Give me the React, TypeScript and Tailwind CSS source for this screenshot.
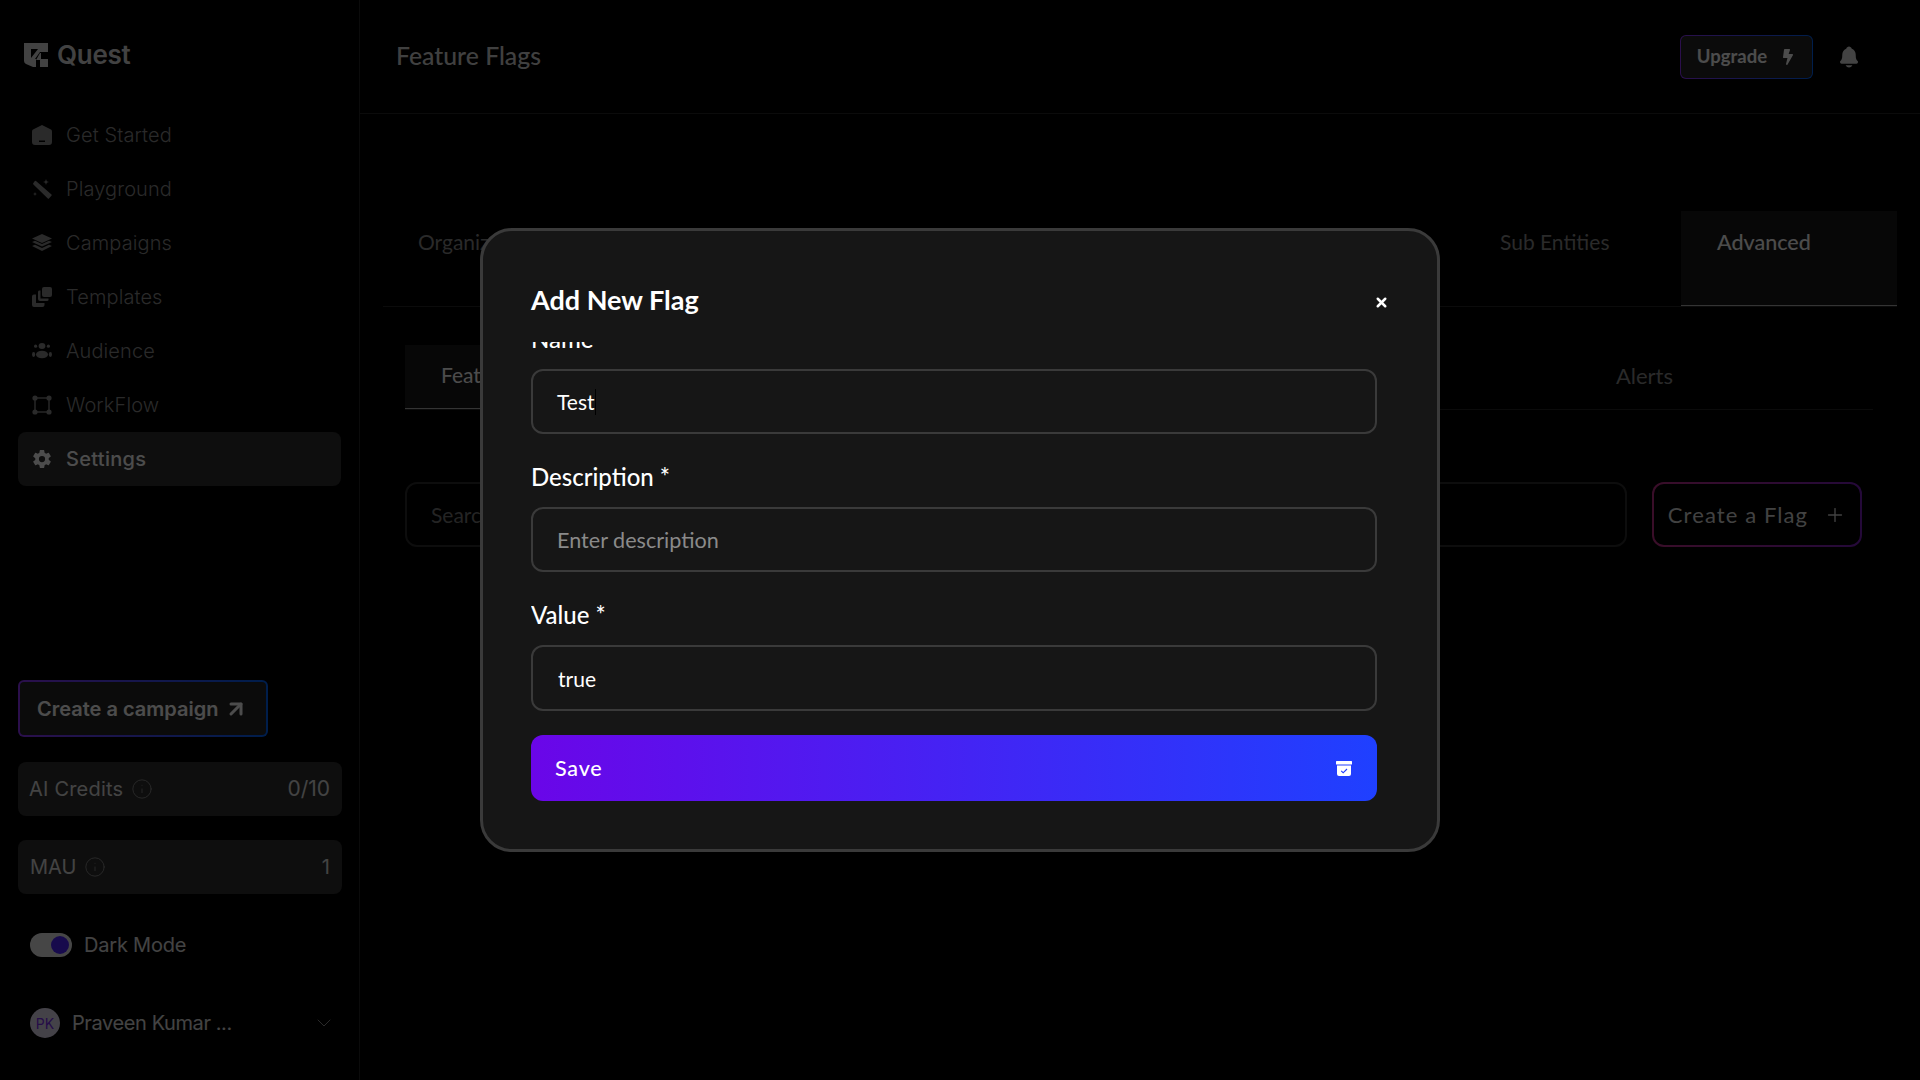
import React from 'react';
import { ArrowUpRight, ChevronDown, Info, Plus, X } from 'lucide-react';
import { FaBolt } from 'react-icons/fa';
import { IoNotifications, IoSettingsSharp } from 'react-icons/io5';

const HomeIcon = () => (
  <svg width="20" height="20" viewBox="0 0 20 20" fill="currentColor">
    <path d="M10 0 L19 4.5 Q20 5 20 6.5 V17 Q20 20 17 20 H3 Q0 20 0 17 V6.5 Q0 5 1 4.5 Z M7 15.5 V17 H13 V15.5 Z" fillRule="evenodd" />
  </svg>
);

const WandIcon = () => (
  <svg width="20" height="20" viewBox="0 0 20 20" fill="currentColor">
    <path d="M4 2 L19.5 15.5 Q20 16 19.6 16.6 L17 19.4 Q16.4 20 15.8 19.4 L1.4 5.6 Q0.6 4.8 1.4 4 L2.6 2.2 Q3.2 1.4 4 2 Z" />
    <path d="M14 0 L14.8 2.2 L17 3 L14.8 3.8 L14 6 L13.2 3.8 L11 3 L13.2 2.2 Z" />
    <path d="M3 13 L3.6 14.4 L5 15 L3.6 15.6 L3 17 L2.4 15.6 L1 15 L2.4 14.4 Z" />
  </svg>
);

const LayersIcon = () => (
  <svg width="20" height="18" viewBox="0 0 20 18" fill="currentColor">
    <path d="M10 0 L20 4.5 L10 9 L0 4.5 Z" />
    <path d="M0 8 L3 6.8 L10 10 L17 6.8 L20 8 L10 12.5 Z" />
    <path d="M0 12 L3 10.8 L10 14 L17 10.8 L20 12 L10 17 Z" />
  </svg>
);

const TemplatesIcon = () => (
  <svg width="20" height="20" viewBox="0 0 20 20" fill="currentColor">
    <rect x="10" y="0" width="10" height="10" rx="2" />
    <path d="M7 3.5 H8.5 V11.5 H16.5 V13 Q16.5 14 15 14 H8 Q6 14 6 12 V5 Q6 3.5 7 3.5 Z" />
    <path d="M2 7.5 H4 V16 H12.5 V18 Q12.5 20 10.5 20 H2 Q0 20 0 18 V9.5 Q0 7.5 2 7.5 Z" />
  </svg>
);

const AudienceIcon = () => (
  <svg width="20" height="16" viewBox="0 0 20 16" fill="currentColor">
    <ellipse cx="10" cy="3" rx="3.4" ry="3" />
    <ellipse cx="10" cy="11.5" rx="6" ry="3.8" />
    <circle cx="3.6" cy="3.2" r="1.6" />
    <circle cx="16.4" cy="3.2" r="1.6" />
    <ellipse cx="1.6" cy="11.5" rx="1.6" ry="2.4" />
    <ellipse cx="18.4" cy="11.5" rx="1.6" ry="2.4" />
  </svg>
);

const WorkflowIcon = () => (
  <svg width="20" height="20" viewBox="0 0 20 20" fill="currentColor" stroke="currentColor">
    <rect x="3" y="3" width="14" height="14" fill="none" strokeWidth="1.4" />
    <circle cx="3" cy="3" r="2.6" stroke="none" />
    <circle cx="17" cy="3" r="2.6" stroke="none" />
    <circle cx="3" cy="17" r="2.6" stroke="none" />
    <circle cx="17" cy="17" r="2.6" stroke="none" />
  </svg>
);

// shield with a notch cut out of the lower right corner
const QuestLogo = () => (
  <svg width="24" height="24" viewBox="0 0 24 24" fill="currentColor">
    <path d="M0 0 H24 V9 H16 L11 16 H12 V24 H9 L2 21 Q0 20 0 18 Z M7 6 V15 L14 6 Z" fillRule="evenodd" />
    <path d="M16 10 H17 V16 H24 V24 H16 V17 H12 Z" />
  </svg>
);

const SaveIcon = () => (
  <svg width="16" height="15" viewBox="0 0 16 15" fill="#fff">
    <rect x="0" y="0" width="16" height="3.5" rx="0.5" />
    <path fillRule="evenodd" d="M1 4.5 H15 V13 Q15 15 13 15 H3 Q1 15 1 13 Z M5.6 9.4 L7.2 11 L10.6 7.6 L11.4 8.4 L7.2 12.4 L4.8 10.2 Z" />
  </svg>
);

const navItems = [
  { label: 'Get Started', icon: <HomeIcon /> },
  { label: 'Playground', icon: <WandIcon /> },
  { label: 'Campaigns', icon: <LayersIcon /> },
  { label: 'Templates', icon: <TemplatesIcon /> },
  { label: 'Audience', icon: <AudienceIcon /> },
  { label: 'WorkFlow', icon: <WorkflowIcon /> },
];

const Sidebar = () => (
  <aside className="w-[360px] h-full shrink-0 border-r border-[#262626] flex flex-col px-[18px] font-['Inter',sans-serif]">
    <div className="flex items-center gap-[9px] pl-[6px] pt-[43px] text-[#dcdcdc]">
      <QuestLogo />
      <span className="text-[26px] leading-[24px] font-semibold tracking-[-0.3px]">Quest</span>
    </div>
    <nav className="mt-[41px] flex flex-col">
      {navItems.map((item) => (
        <div key={item.label} className="h-[54px] flex items-center text-[#8c8c8c]">
          <div className="w-[20px] ml-[14px] flex justify-center">{item.icon}</div>
          <span className="ml-[14px] text-[20px] font-light tracking-[0.1px]">{item.label}</span>
        </div>
      ))}
      <div className="h-[54px] flex items-center bg-[#2f2f2f] rounded-lg text-white">
        <div className="w-[20px] ml-[14px] flex justify-center">
          <IoSettingsSharp size={22} />
        </div>
        <span className="ml-[14px] text-[20px] font-medium tracking-[0.3px]">Settings</span>
      </div>
    </nav>
    <div className="mt-[194px] w-[250px] h-[57px] rounded-md p-[2px] bg-linear-to-r/srgb from-[#9035ff] to-[#0065ff]">
      <div className="h-full rounded-[4px] bg-[#262626] flex items-center pl-[17px] gap-[6px] text-white">
        <span className="text-[20px] font-semibold">Create a campaign</span>
        <ArrowUpRight size={24} strokeWidth={3} />
      </div>
    </div>
    <div className="mt-[25px] w-[324px] h-[54px] rounded-lg bg-[#2f2f2f] flex items-center justify-between pl-[11px] pr-3 text-[#e0e0e0] text-[20px]">
      <div className="flex items-center gap-[8px]">
        <span className="tracking-[0.2px]">AI Credits</span>
        <Info size={22} strokeWidth={1} className="text-[#8c8c8c]" />
      </div>
      <span className="text-[21px]">0/10</span>
    </div>
    <div className="mt-[24px] w-[324px] h-[54px] rounded-lg bg-[#2f2f2f] flex items-center justify-between pl-3 pr-3 text-[#e0e0e0] text-[20px]">
      <div className="flex items-center gap-[8px]">
        <span>MAU</span>
        <Info size={22} strokeWidth={1} className="text-[#8c8c8c]" />
      </div>
      <span>1</span>
    </div>
    <div className="mt-[36px] ml-3 flex items-center gap-3">
      <div className="w-[42px] h-[24px] rounded-full bg-[#ececec] flex items-center justify-end pr-[3px]">
        <div className="w-[18px] h-[18px] rounded-full bg-[#4d24ff]" />
      </div>
      <span className="text-[20px] tracking-[-0.2px] text-[#e0e0e0]">Dark Mode</span>
    </div>
    <div className="mt-[48px] ml-3 flex items-center">
      <div className="w-[30px] h-[30px] rounded-full bg-[#e4dcf2] flex items-center justify-center text-[14px] text-[#7c2cf0]">
        PK
      </div>
      <span className="ml-3 text-[20px] tracking-[-0.4px] text-[#e0e0e0]">Praveen Kumar ...</span>
      <ChevronDown size={24} strokeWidth={1} className="ml-auto mr-[5px] text-[#8c8c8c]" />
    </div>
  </aside>
);

const Main = () => (
  <main className="flex-1 h-full flex flex-col font-['Lato',sans-serif]">
    <header className="h-[114px] shrink-0 border-b border-[#262626] flex items-center pl-[36px] pr-[59px]">
      <h1 className="text-[24.8px] font-medium text-[#d8d8d8] -translate-y-[1px]">Feature Flags</h1>
      <div className="ml-auto w-[133px] h-[44px] rounded-md p-px bg-linear-to-r/srgb from-[#9035ff] to-[#0065ff]">
        <div className="h-full rounded-[5px] bg-[#262626] flex items-center justify-center gap-[13px] text-white">
          <span className="text-[18.5px] font-bold">Upgrade</span>
          <FaBolt size={16} />
        </div>
      </div>
      <div className="ml-[24px] text-[#e0e0e0]">
        <IoNotifications size={24} />
      </div>
    </header>
    <div className="pl-[23px] pr-[23px] pt-[97px]">
      <div className="h-[96px] flex border-b border-[#262626]">
        <div className="w-[200px] pl-[35px] pt-[15px] text-[21px] text-[#8c8c8c]">Organization</div>
        <div className="ml-auto flex">
          <div className="w-[181px] pt-[15px] text-[21px] text-[#8c8c8c]">Sub Entities</div>
          <div className="w-[216px] pl-[36px] pt-[15px] text-[21.5px] font-medium text-white bg-[#181818] border-b border-[#b0b0b0]">Advanced</div>
        </div>
      </div>
      <div className="mx-[22px] mr-[24px]">
        <div className="mt-[38px] h-[65px] flex border-b border-[#262626]">
          <div className="w-[200px] pl-[36px] pt-[14px] text-[21px] text-white bg-[#181818] border-b border-[#b0b0b0]">Feature Flags</div>
          <div className="ml-auto mr-[200px] pt-[14px] text-[22px] text-[#8c8c8c]">Alerts</div>
        </div>
        <div className="mt-[72px] flex gap-[25px] mr-[11px]">
          <div className="flex-1 h-[65px] rounded-xl border-2 border-[#2c2c2c] flex items-center pl-[24px] text-[21px] text-[#7a7a7a]">Search</div>
          <div className="w-[210px] h-[65px] rounded-xl p-[2px] bg-linear-to-r/srgb from-[#c2308a] to-[#7a20c0]">
            <div className="h-full rounded-[10px] bg-black flex items-center justify-center gap-[16px] text-[#dcdcdc]">
              <span className="text-[22px] tracking-[1.1px]">Create a Flag</span>
              <Plus size={22} strokeWidth={1.5} />
            </div>
          </div>
        </div>
      </div>
    </div>
  </main>
);

const FlagModal = () => (
  <div className="absolute inset-0 bg-black/70 flex items-center justify-center font-['Lato',sans-serif]">
    <div className="w-[960px] h-[624px] bg-[#161616] border-[3px] border-[#3a3a3a] rounded-[32px] pl-[48px] pr-[60px] flex flex-col">
      <div className="relative pt-[53px] h-[111px] shrink-0">
        <h2 className="text-[27px] leading-[32px] font-bold text-white">Add New Flag</h2>
        <X size={15} strokeWidth={4} className="absolute right-[-12px] top-[64px] text-white" />
      </div>
      <div className="h-[470px] overflow-hidden">
        <div className="text-[24px] leading-[28px] font-medium text-white -mt-[17px]">Name</div>
        <div className="mt-[16px] h-[65px] rounded-xl border-2 border-[#3a3a3a] flex items-center pl-[24px] text-[21px] text-white">
          <span>Test</span>
          <span className="w-px h-[26px] bg-black" />
        </div>
        <div className="mt-[29px] text-[24px] leading-[28px] font-medium text-white">Description *</div>
        <input
          readOnly
          placeholder="Enter description"
          className="mt-[16px] w-full h-[65px] rounded-xl border-2 border-[#3a3a3a] bg-transparent pl-[24px] text-[21.6px] text-white placeholder:text-[#8a8a8a] outline-none"
        />
        <div className="mt-[29px] text-[24px] leading-[28px] font-medium text-white">Value *</div>
        <div className="mt-[16px] h-[66px] rounded-xl border-2 border-[#3a3a3a] flex items-center pl-[25px] pt-[2px] text-[21px] text-white">
          true
        </div>
        <button className="mt-[24px] w-full h-[66px] rounded-xl bg-linear-to-r/srgb from-[#6a06e8] to-[#1f40ff] flex items-center justify-between pl-[24px] pr-[25px] text-[21.5px] font-medium tracking-[0.8px] text-white">
          <span>Save</span>
          <SaveIcon />
        </button>
      </div>
    </div>
  </div>
);

export default function App() {
  return (
    <div className="relative w-[1920px] h-[1080px] bg-black overflow-hidden flex">
      <Sidebar />
      <Main />
      <FlagModal />
    </div>
  );
}
